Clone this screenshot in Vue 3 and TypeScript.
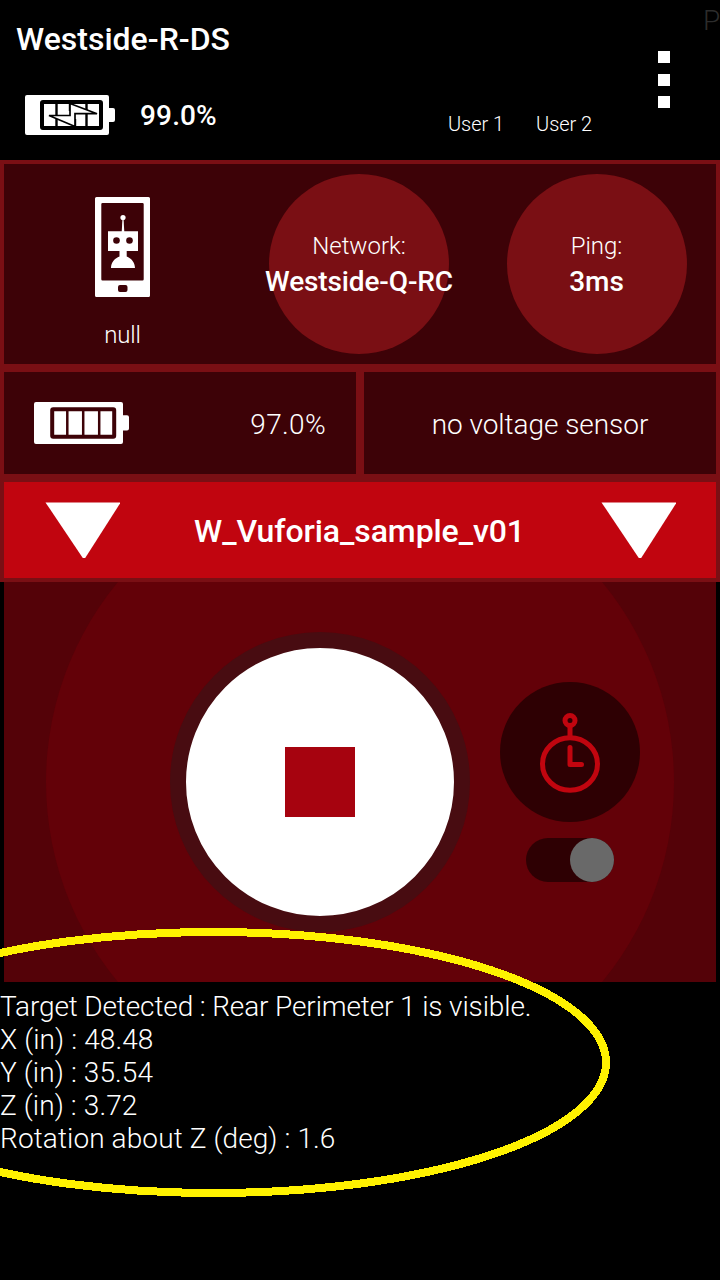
<script setup lang="ts">
interface TelemetryLine {
  label: string
  value: string
  tight?: boolean
}

const users: string[] = ['User 1', 'User 2']
const telemetry: TelemetryLine[] = [
  { label: 'Target Detected', value: 'Rear Perimeter 1 is visible.', tight: true },
  { label: 'X (in)', value: '48.48' },
  { label: 'Y (in)', value: '35.54' },
  { label: 'Z (in)', value: '3.72' },
  { label: 'Rotation about Z (deg)', value: '1.6' },
]
</script>

<template>
  <main class="screen">
    <header class="header">
      <div class="device">
        <h1 class="device-name">Westside-R-DS</h1>
        <div class="device-battery">
          <svg class="battery-ds" width="90" height="40" viewBox="0 0 90 40">
            <path fill="#fff" d="M2 0H82Q84 0 84 2V13H88Q90 13 90 15V25Q90 27 88 27H84V38Q84 40 82 40H2Q0 40 0 38V2Q0 0 2 0Z" />
            <rect x="17" y="7" width="59" height="26" fill="#fff" stroke="#000" stroke-width="4" rx="1" />
            <path d="M31.500 7V33M45 7V16M50 24V33M61.500 7V33" stroke="#000" stroke-width="2.400" />
            <path d="M45 8.500L72 18.700H50V31.500L24 20.500H45Z" fill="#fff" stroke="#000" stroke-width="1.700" />
          </svg>
          <span>99.0%</span>
        </div>
      </div>
      <div class="users">
        <span v-for="user in users" :key="user">{{ user }}</span>
      </div>
      <div class="menu"><i /><i /><i /></div>
      <span class="ping-edge">P</span>
    </header>

    <section class="status">
      <div class="robot">
        <svg width="55" height="100" viewBox="0 0 55 100">
          <path fill="#fff" fill-rule="evenodd" d="M1.500 0H53.500Q55 0 55 1.500V98.500Q55 100 53.500 100H1.500Q0 100 0 98.500V1.500Q0 0 1.500 0ZM7.500 6Q6.300 6 6.300 7.200V82.300Q6.300 83.500 7.500 83.500H47.500Q48.700 83.500 48.700 82.300V7.200Q48.700 6 47.500 6ZM25 88Q23 88 23 90V93Q23 95 25 95H30.500Q32.500 95 32.500 93V90Q32.500 88 30.500 88Z" />
          <circle cx="28" cy="20.500" r="2.600" fill="#fff" />
          <path d="M27.500 21H28.500L29.300 35H26.700Z" fill="#fff" />
          <path fill="#fff" d="M13 34.200H43V54H31.700V59.500C36 61 40 65.500 40 71H16C16 65.500 20 61 24.500 59.500V54H13Z" />
          <circle cx="21.500" cy="43.500" r="3.300" fill="#3d0207" />
          <circle cx="34.500" cy="43.500" r="3.300" fill="#3d0207" />
        </svg>
        <span>null</span>
      </div>
      <div class="bubble-cell">
        <div class="bubble network"><span>Network:</span><strong>Westside-Q-RC</strong></div>
      </div>
      <div class="bubble-cell">
        <div class="bubble ping"><span>Ping:</span><strong>3ms</strong></div>
      </div>
    </section>

    <section class="power">
      <div class="rc-battery">
        <svg width="95" height="42" viewBox="0 0 95 42">
          <path fill="#fff" d="M2 0H87Q89 0 89 2V13.300H93Q95 13.300 95 15.300V26.500Q95 28.500 93 28.500H89V40Q89 42 87 42H2Q0 42 0 40V2Q0 0 2 0Z" />
          <rect x="18.200" y="7.200" width="62" height="27.600" rx="1" fill="#fff" stroke="#3d0207" stroke-width="4" />
          <path d="M33.300 7V35M49.200 7V35M65.200 7V35" stroke="#3d0207" stroke-width="2.500" />
        </svg>
        <span class="rc-level">97.0%</span>
      </div>
      <div class="voltage"><span>no voltage sensor</span></div>
    </section>

    <section class="opmode">
      <svg class="arrow" width="75" height="56" viewBox="0 0 75 56"><path fill="#fff" d="M.5 .4H75V1.500L40.200 56H37.800Z" /></svg>
      <span class="opmode-name">W_Vuforia_sample_v01</span>
      <svg class="arrow" width="75" height="56" viewBox="0 0 75 56"><path fill="#fff" d="M.5 .4H75V1.500L40.200 56H37.800Z" /></svg>
    </section>

    <section class="stage">
      <div class="halo" />
      <button class="stop" aria-label="Stop"><i /></button>
      <div class="timer">
        <div class="timer-face">
          <svg width="60" height="80" viewBox="0 0 60 80" fill="none" stroke="#c1050f" stroke-width="5">
            <circle cx="30" cy="7.500" r="5" />
            <path d="M30 13V25" />
            <ellipse cx="30" cy="51" rx="27.500" ry="26.300" />
            <path d="M30 34.500V51.500H41.500" stroke-linecap="round" stroke-linejoin="round" />
          </svg>
        </div>
        <div class="switch"><i /></div>
      </div>
    </section>

    <section class="telemetry">
      <p v-for="line in telemetry" :key="line.label" :class="{ tight: line.tight }">{{ line.label }} : {{ line.value }}</p>
    </section>

    <svg class="highlight" width="720" height="280" viewBox="0 920 720 280">
      <ellipse cx="213.500" cy="1062.500" rx="392.500" ry="130.500" fill="none" stroke="#fff200" stroke-width="8" shape-rendering="crispEdges" />
    </svg>
  </main>
</template>

<style>
body {
  margin: 0;
  background: #000;
}
</style>

<style scoped>
.screen {
  position: relative;
  width: 720px;
  height: 1280px;
  overflow: hidden;
  background: #000;
  color: #fff;
  font-family: Roboto, sans-serif;
  font-weight: 300;
  box-sizing: border-box;
}
.header {
  position: relative;
  display: flex;
  height: 160px;
}
.device {
  width: 448px;
}
.device-name {
  margin: 20px 0 0 16px;
  font-size: 32px;
  line-height: 38px;
  font-weight: 500;
}
.device-battery {
  display: flex;
  align-items: center;
  gap: 25px;
  margin: 37px 0 0 25px;
  height: 40px;
  font-size: 28px;
  font-weight: 500;
  letter-spacing: 0.15px;
}
.users {
  display: flex;
  gap: 32px;
  width: 210px;
  padding-top: 112px;
  font-size: 20px;
  line-height: 24px;
  letter-spacing: -0.05px;
  white-space: nowrap;
}
.menu {
  display: flex;
  flex-direction: column;
  gap: 10.500px;
  padding-top: 51px;
}
.menu i {
  width: 12px;
  height: 12px;
  background: #fff;
}
.ping-edge {
  position: absolute;
  left: 703px;
  top: 4px;
  font-size: 28px;
  line-height: 33px;
  color: #2c2c2c;
}
.status {
  display: grid;
  grid-template-columns: 237px 236px 239px;
  height: 200px;
  border: 4px solid #7a0f14;
  background: #3d0207;
}
.robot {
  display: flex;
  flex-direction: column;
  align-items: center;
  padding-top: 33px;
  font-size: 24px;
  line-height: 28px;
}
.robot span {
  margin-top: 24px;
  letter-spacing: -0.15px;
}
.bubble-cell {
  display: flex;
  align-items: center;
  justify-content: center;
}
.bubble {
  display: flex;
  flex-direction: column;
  align-items: center;
  justify-content: center;
  box-sizing: border-box;
  width: 180px;
  height: 180px;
  padding-bottom: 2px;
  border-radius: 50%;
  background: #7a0f14;
  white-space: nowrap;
}
.bubble span {
  font-size: 24px;
  line-height: 36px;
}
.bubble strong {
  font-size: 28px;
  line-height: 35px;
  font-weight: 500;
}
.network strong {
  letter-spacing: -0.13px;
}
.power {
  display: grid;
  grid-template-columns: 352px 352px;
  gap: 8px;
  height: 102px;
  padding: 4px;
  background: #7a0f14;
}
.power > div {
  display: flex;
  align-items: center;
  background: #3d0207;
  font-size: 28px;
}
.power .rc-battery {
  justify-content: space-between;
  padding: 0 30px;
}
.power span {
  padding-top: 2px;
}
.rc-level {
  letter-spacing: 0.35px;
}
.power .voltage {
  justify-content: center;
  letter-spacing: -0.05px;
}
.opmode {
  display: flex;
  align-items: center;
  justify-content: space-between;
  height: 96px;
  padding: 0 40px 0 41px;
  border: 4px solid #7a0f14;
  background: #c1050f;
}
.opmode-name {
  margin-right: 2px;
  padding-top: 1px;
  font-size: 32px;
  font-weight: 500;
  letter-spacing: -0.08px;
}
.stage {
  position: relative;
  display: flex;
  align-items: center;
  box-sizing: border-box;
  width: 712px;
  height: 400px;
  margin: 0 4px;
  overflow: hidden;
  background: #540208;
}
.halo {
  position: absolute;
  left: 42px;
  top: -114px;
  width: 628px;
  height: 628px;
  border-radius: 50%;
  background: #630108;
}
.stop {
  position: relative;
  display: flex;
  align-items: center;
  justify-content: center;
  box-sizing: border-box;
  width: 300px;
  height: 300px;
  margin: 0 0 0 166px;
  padding: 0;
  border: 16px solid #480c11;
  border-radius: 50%;
  background: #fff;
}
.stop i {
  width: 70px;
  height: 70px;
  background: #a6030f;
}
.timer {
  position: relative;
  display: flex;
  flex-direction: column;
  align-items: center;
  gap: 16px;
  margin-left: 30px;
}
.timer-face {
  display: flex;
  align-items: center;
  justify-content: center;
  width: 140px;
  height: 140px;
  border-radius: 50%;
  background: #2e0003;
}
.timer-face svg {
  margin-top: 2px;
}
.switch {
  display: flex;
  justify-content: flex-end;
  width: 88px;
  height: 44px;
  border-radius: 22px;
  background: #2e0003;
}
.switch i {
  width: 44px;
  height: 44px;
  border-radius: 50%;
  background: #696969;
}
.telemetry {
  padding-top: 8px;
  font-size: 28px;
  line-height: 33px;
}
.telemetry p {
  margin: 0;
  letter-spacing: 0.1px;
}
.telemetry .tight {
  letter-spacing: -0.13px;
}
.highlight {
  position: absolute;
  left: 0;
  top: 920px;
}
</style>
